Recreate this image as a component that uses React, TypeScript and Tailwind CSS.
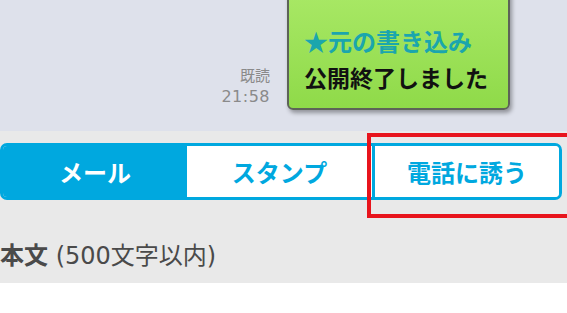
import React from "react";

const jp = { fontFamily: '"Noto Sans CJK JP", sans-serif' };

const App = () => {
  return (
    <div
      className="relative w-[567px] h-[313px] overflow-hidden bg-white"
      style={{ fontFamily: '"DejaVu Sans", "Noto Sans CJK JP", sans-serif' }}
    >
      {/* chat area */}
      <div className="flex items-end h-[131px] pb-[21px] bg-[#dee1eb]">
        <div className="w-[270px] flex flex-col items-end pb-[2px] text-[#8a8a8a]">
          <span className="text-[15px] leading-[22px]" style={jp}>既読</span>
          <span className="text-[16px] leading-[22px] tracking-[0.5px]">21:58</span>
        </div>
        <div className="ml-[17px] w-[223px] h-[150px] shrink-0 flex flex-col justify-end px-[15px] pb-[13px] rounded-[6px] border-2 border-[#5d6358] bg-gradient-to-b from-[#afec6c] to-[#8fda49] shadow-[2px_3px_4px_rgba(0,0,0,0.35)]">
          <div className="text-[24px] leading-[36px] font-bold text-[#1ba6ad]" style={jp}>
            ★元の書き込み
          </div>
          <div className="text-[23px] leading-[36px] font-bold text-[#111]" style={jp}>
            公開終了しました
          </div>
        </div>
      </div>

      {/* tabs + label */}
      <div className="h-[152px] bg-[#e9e9e9] pt-[12px]">
        <div className="flex w-[562px] h-[57px] border-[3px] border-[#00a8df] rounded-[7px] overflow-hidden text-[24px] font-bold" style={jp}>
          <div className="w-[184px] flex items-center justify-center bg-[#00a8df] text-white">
            メール
          </div>
          <div className="w-[185px] flex items-center justify-center bg-white text-[#00a8df]">
            スタンプ
          </div>
          <div className="flex-1 flex items-center justify-center bg-white text-[#00a8df] border-l-[3px] border-[#00a8df]">
            電話に誘う
          </div>
        </div>
        <div className="mt-[38px] text-[24px] leading-[32px] text-[#4a4a4a]">
          <span className="font-bold" style={jp}>本文</span> (500文字以内)
        </div>
      </div>

      {/* annotation */}
      <div className="absolute left-[367px] top-[133px] w-[230px] h-[85px] border-4 border-[#e8141c]" />
    </div>
  );
};

export default App;
